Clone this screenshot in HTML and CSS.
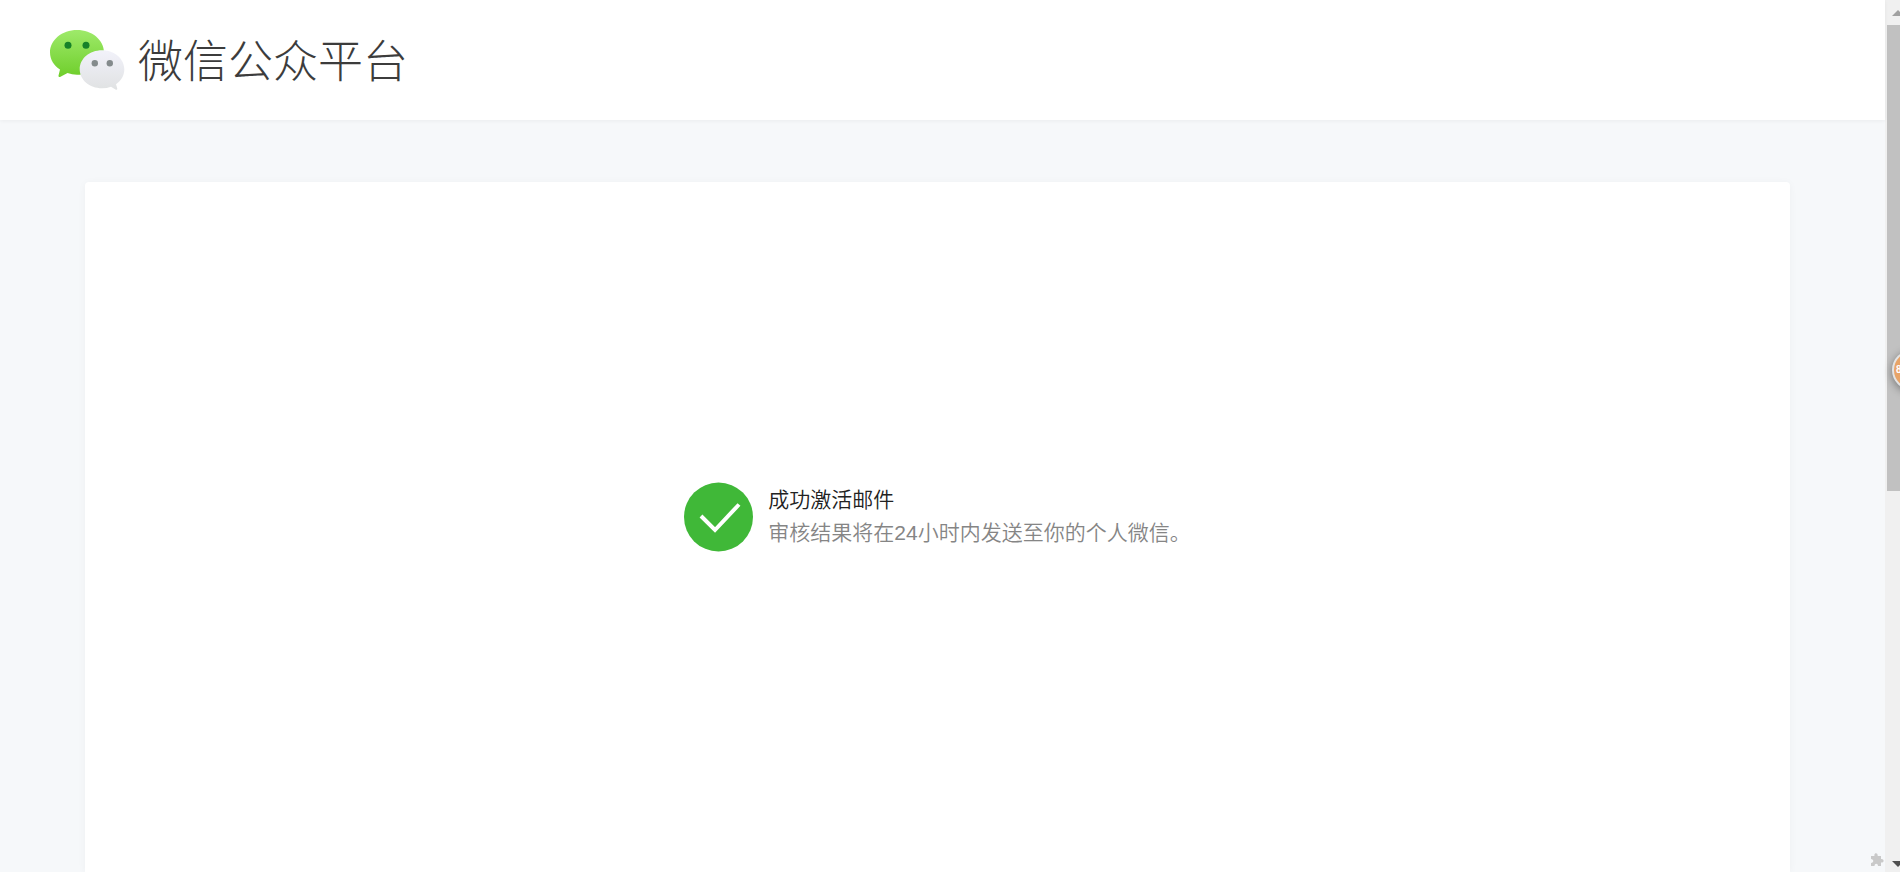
FILE: index.html
```html
<!DOCTYPE html>
<html lang="zh-CN">
<head>
    <meta charset="UTF-8">
    <meta name="viewport" content="width=device-width, initial-scale=1.0">
    <title>微信公众平台</title>
    <link rel="stylesheet" href="styles.css">
</head>
<body>

<div class="page">
    <header class="header">
        <svg class="logo-icon" width="76" height="60" viewBox="0 0 76 60" aria-hidden="true">
            <defs>
                <linearGradient id="green" x1="0" y1="0" x2="0" y2="1">
                    <stop offset="0" stop-color="#9eea6a"/>
                    <stop offset="1" stop-color="#6fce2b"/>
                </linearGradient>
                <linearGradient id="grey" x1="0" y1="0" x2="0" y2="1">
                    <stop offset="0" stop-color="#f2f2fa"/>
                    <stop offset="1" stop-color="#e0e2e3"/>
                </linearGradient>
            </defs>
            <path fill="url(#green)" d="M27 0C12 0 0 10 0 22.500C0 29.500 4 35.500 10 39.500L8.500 45.500Q8.300 47.800 10.500 46.800L17.500 43Q22 44.800 27 44.800C42 44.800 54 35 54 22.500C54 10 42 0 27 0Z"/>
            <circle cx="18" cy="15.200" r="3.500" fill="#168129"/>
            <circle cx="36" cy="15.200" r="3.500" fill="#168129"/>
            <path fill="url(#grey)" d="M52 20.300C39.500 20.300 29.700 28.700 29.700 39.300C29.700 49.900 39.500 58.300 52 58.300Q57 58.300 61 56.800L65.500 59.400Q67.500 60.300 67.200 58.300L66 54.200C71.300 50.700 74.300 45.500 74.300 39.300C74.300 28.700 64.300 20.300 52 20.300Z"/>
            <circle cx="44.800" cy="33.300" r="3.200" fill="#848b8c"/>
            <circle cx="59.800" cy="33.300" r="3.200" fill="#848b8c"/>
        </svg>
        <h1>微信公众平台</h1>
    </header>

    <main class="card">
        <div class="message">
            <svg class="status-icon" width="70" height="70" viewBox="0 0 70 70" aria-hidden="true">
                <circle cx="34.500" cy="35" r="34.500" fill="#40b838"/>
                <path d="M17 34L31 48L55 22.500" fill="none" stroke="#fff" stroke-width="4"/>
            </svg>
            <div class="message-text">
                <h2>成功激活邮件</h2>
                <p>审核结果将在24小时内发送至你的个人微信。</p>
            </div>
        </div>
    </main>

    <svg class="puzzle" width="14" height="14" viewBox="0 0 14 14" aria-hidden="true">
        <path fill="#c9c9c9" d="M1 3H4.500C3.500 0 8 -1 7.700 3H11V6C14.500 5.500 14.500 10 11 9.500V13H8C8 10 4.500 10 4.500 13H1V10C4 9.500 4 6.500 1 6Z"/>
    </svg>
</div>

<div class="scrollbar" aria-hidden="true">
    <svg class="arrow" width="12" height="6" viewBox="0 0 12 6"><path fill="#a0a0a0" d="M0 6L6 0L12 6Z"/></svg>
    <div class="thumb"></div>
    <svg class="arrow" width="12" height="6" viewBox="0 0 12 6"><path fill="#505050" d="M0 0H12L6 6Z"/></svg>
</div>

<div class="bubble">8</div>

</body>
</html>
```

FILE: styles.css
```css
* {
    margin: 0;
    padding: 0;
    box-sizing: border-box;
}

body {
    display: flex;
    height: 100vh;
    overflow: hidden;
    position: relative;
    background-color: #f6f8f9;
    color: #222;
    font-family: "Liberation Sans", "Noto Sans CJK SC", sans-serif;
}

.page {
    flex: 1;
    display: flex;
    flex-direction: column;
    position: relative;
    background-color: #f6f8fa;
}

.header {
    display: flex;
    align-items: center;
    gap: 12px;
    height: 120px;
    padding: 0 50px;
    background-color: #fff;
    box-shadow: 0 1px 4px rgba(0, 0, 0, 0.05);
}

.header h1 {
    padding-bottom: 2px;
    font-family: "Noto Sans CJK SC", sans-serif;
    font-size: 45px;
    font-weight: 300;
    line-height: 60px;
    color: #3c3c3c;
}

.card {
    flex: 1;
    display: flex;
    justify-content: center;
    align-items: flex-start;
    margin: 62px 95px 0 85px;
    padding-top: 300px;
    background-color: #fff;
    border-radius: 4px 4px 0 0;
    box-shadow: 0 1px 8px rgba(0, 0, 0, 0.04);
}

.message {
    display: flex;
    align-items: center;
    gap: 14px;
}

.message-text {
    padding-bottom: 3px;
    font-size: 21px;
    line-height: 33px;
}

.message-text h2 {
    font-size: 21px;
    font-weight: 350;
}

.message-text p {
    font-weight: 350;
    color: #858585;
}

.puzzle {
    position: absolute;
    right: 1px;
    bottom: 5px;
}

/* scrollbar on the right edge */
.scrollbar {
    display: flex;
    flex-direction: column;
    width: 15px;
    padding: 10px 0 5px 2px;
    overflow: hidden;
    background-color: #f0f0f0;
}

.arrow {
    flex: none;
    margin-left: 5px;
}

.thumb {
    height: 466px;
    margin: 9px 0 auto;
    background-color: #c1c1c1;
}

.bubble {
    position: absolute;
    top: 350px;
    right: -32px;
    width: 40px;
    height: 40px;
    padding-left: 2px;
    border: 2px solid #e4e4e4;
    border-radius: 50%;
    background-color: #e8a468;
    box-shadow: 0 2px 8px rgba(0, 0, 0, 0.4);
    color: #fff;
    font-size: 10px;
    font-weight: bold;
    line-height: 36px;
}
```
